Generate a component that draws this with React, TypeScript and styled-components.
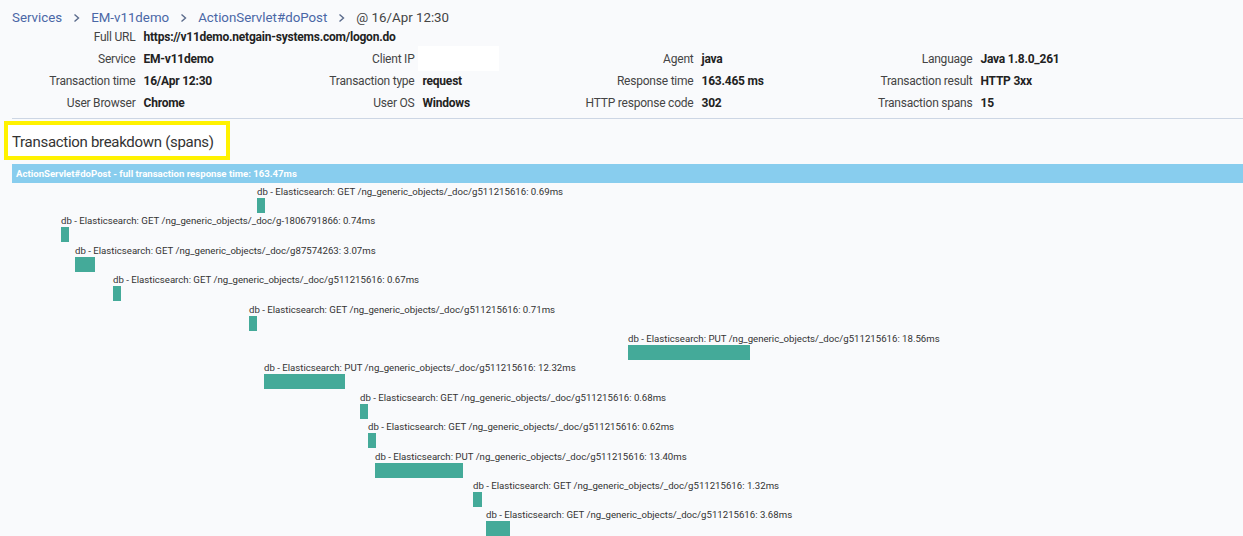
import { Fragment } from 'react';
import styled, { createGlobalStyle } from 'styled-components';

const GlobalStyle = createGlobalStyle`
    html, body {
        margin: 0;
        padding: 0;
        background: #f9fafc;
    }
    * {
        box-sizing: border-box;
    }
`;

const Page = styled.div`
    font-family: Roboto, "Liberation Sans", sans-serif;
    width: 1243px;
    height: 536px;
    overflow: hidden;
    background: #f9fafc;
    color: #333;
`;

const Breadcrumb = styled.div`
    display: flex;
    align-items: center;
    gap: 11px;
    padding: 9px 12px 0;
    height: 26px;
    font-size: 13.3px;
    line-height: 17px;
`;

const Crumb = styled.span<{ $current?: boolean }>`
    color: ${p => (p.$current ? '#444' : '#4a67a6')};
    white-space: nowrap;
`;

const DetailGrid = styled.div`
    display: grid;
    grid-template-columns: repeat(8, 139.5px);
    grid-auto-rows: 22px;
    font-size: 12px;
    letter-spacing: -0.22px;
`;

const Label = styled.div`
    text-align: right;
    padding-right: 4px;
    line-height: 22px;
    color: #444;
    white-space: nowrap;
`;

const Value = styled.div<{ $wide?: boolean }>`
    padding-left: 4px;
    line-height: 22px;
    font-weight: 700;
    color: #222;
    white-space: nowrap;
    grid-column: ${p => (p.$wide ? '2 / span 7' : 'auto')};
`;

const BlankValue = styled.div`
    width: 81px;
    height: 25px;
    margin: -2px 0 0 -1px;
    background: #fff;
`;

const Divider = styled.div`
    margin: 4px 0 0 12px;
    border-top: 1px solid #cdd6e4;
`;

const Breakdown = styled.div`
    padding-left: 12px;
`;

const TitleBox = styled.div`
    display: inline-flex;
    align-items: center;
    margin: 2px 0 0 -8px;
    height: 39px;
    padding: 3px 12px 0 4px;
    border: 4px solid #fff200;
    background: #fff;
    font-size: 15px;
    letter-spacing: -0.3px;
    color: #333;
`;

const FullBar = styled.div`
    margin-top: 4px;
    height: 19px;
    line-height: 19px;
    padding-left: 4px;
    background: #88cdee;
    color: #fff;
    font-size: 9.6px;
    font-weight: 700;
    white-space: nowrap;
`;

const SpanList = styled.div`
    margin-top: 2px;
`;

const SpanRow = styled.div`
    height: 29.4px;
`;

const SpanLabel = styled.div`
    padding-top: 1px;
    font-size: 9.65px;
    line-height: 12px;
    color: #333;
    white-space: nowrap;
`;

const SpanBar = styled.div`
    height: 15px;
    background: #44aa99;
`;

const Chevron = () => (
    <svg width="7" height="10" viewBox="0 0 7 10">
        <polyline points="1.5,1.5 5.5,5 1.5,8.5" fill="none" stroke="#5b6b8c" strokeWidth="1.4" />
    </svg>
);

const PX_PER_MS = 6.55;
const PATH = '/ng_generic_objects/_doc/';

const spans = [
    { start: 37.4, dur: 0.69, method: 'GET', doc: 'g511215616' },
    { start: 7.48, dur: 0.74, method: 'GET', doc: 'g-1806791866' },
    { start: 9.62, dur: 3.07, method: 'GET', doc: 'g87574263' },
    { start: 15.42, dur: 0.67, method: 'GET', doc: 'g511215616' },
    { start: 36.18, dur: 0.71, method: 'GET', doc: 'g511215616' },
    { start: 94.05, dur: 18.56, method: 'PUT', doc: 'g511215616' },
    { start: 38.47, dur: 12.32, method: 'PUT', doc: 'g511215616' },
    { start: 53.13, dur: 0.68, method: 'GET', doc: 'g511215616' },
    { start: 54.35, dur: 0.62, method: 'GET', doc: 'g511215616' },
    { start: 55.42, dur: 13.4, method: 'PUT', doc: 'g511215616' },
    { start: 70.38, dur: 1.32, method: 'GET', doc: 'g511215616' },
    { start: 72.37, dur: 3.68, method: 'GET', doc: 'g511215616' },
];

const details = [
    [['Service', 'EM-v11demo'], ['Client IP', ''], ['Agent', 'java'], ['Language', 'Java 1.8.0_261']],
    [['Transaction time', '16/Apr 12:30'], ['Transaction type', 'request'], ['Response time', '163.465 ms'], ['Transaction result', 'HTTP 3xx']],
    [['User Browser', 'Chrome'], ['User OS', 'Windows'], ['HTTP response code', '302'], ['Transaction spans', '15']],
];

const App = () => {
    const crumbs = ['Services', 'EM-v11demo', 'ActionServlet#doPost'];
    return (
        <Page>
            <GlobalStyle />
            <Breadcrumb>
                {crumbs.map(c => (
                    <Fragment key={c}>
                        <Crumb>{c}</Crumb>
                        <Chevron />
                    </Fragment>
                ))}
                <Crumb $current>@ 16/Apr 12:30</Crumb>
            </Breadcrumb>

            <DetailGrid>
                <Label>Full URL</Label>
                <Value $wide>https://v11demo.netgain-systems.com/logon.do</Value>
                {details.map(row =>
                    row.map(([label, value]) => (
                        <Fragment key={label}>
                            <Label>{label}</Label>
                            {value ? <Value>{value}</Value> : <div><BlankValue /></div>}
                        </Fragment>
                    ))
                )}
            </DetailGrid>

            <Divider />

            <Breakdown>
                <TitleBox>Transaction breakdown (spans)</TitleBox>
                <FullBar>ActionServlet#doPost - full transaction response time: 163.47ms</FullBar>
                <SpanList>
                    {spans.map((s, i) => {
                        const left = s.start * PX_PER_MS;
                        const width = Math.max(8, Math.round(s.dur * PX_PER_MS));
                        return (
                            <SpanRow key={i}>
                                <SpanLabel style={{ marginLeft: left }}>
                                    db - Elasticsearch: {s.method} {PATH}{s.doc}: {s.dur.toFixed(2)}ms
                                </SpanLabel>
                                <SpanBar style={{ marginLeft: left, width }} />
                            </SpanRow>
                        );
                    })}
                </SpanList>
            </Breakdown>
        </Page>
    );
};

export default App;
